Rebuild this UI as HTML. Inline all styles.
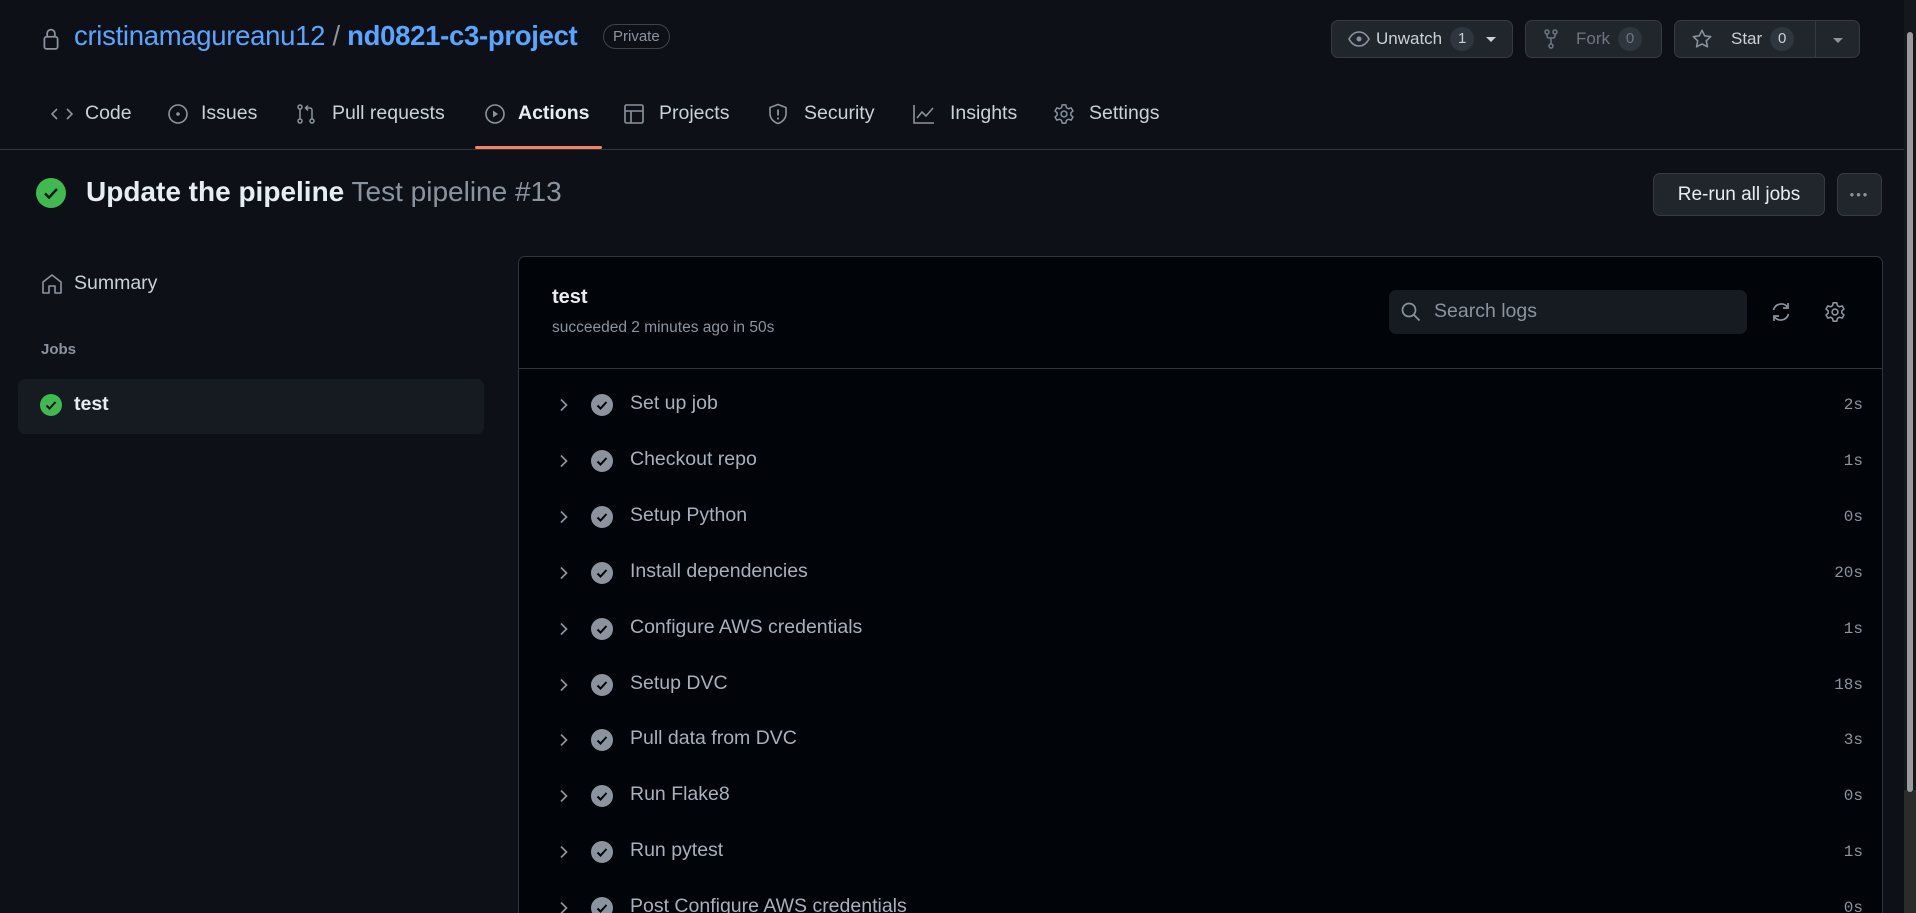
<!DOCTYPE html>
<html><head><meta charset="utf-8"><style>
*{box-sizing:border-box;margin:0;padding:0}
html,body{width:1916px;height:913px;overflow:hidden}
body{background:#0d1117;font-family:"Liberation Sans",sans-serif;color:#c9d1d9;position:relative}
.a{position:absolute}
svg{display:block}
.btn{position:absolute;border:1px solid #363b42;background:#21262d;border-radius:7px;color:#c9d1d9;font-size:17px;display:flex;align-items:center}
.cnt{display:inline-block;background:#30363d;border-radius:14px;min-width:24px;height:24px;line-height:24px;text-align:center;font-size:15px;margin-left:8px}
.tab{position:absolute;top:102px;font-size:19.5px;color:#c9d1d9;display:flex;align-items:center;gap:12px}
</style></head><body>
<!-- header -->
<svg class="a" style="left:42px;top:28px" width="18" height="22" viewBox="0 0 16 20"><rect x="2" y="8" width="12" height="11" rx="2" fill="none" stroke="#8b949e" stroke-width="1.6"/><path d="M4.5 8V5a3.5 3.5 0 017 0v3" fill="none" stroke="#8b949e" stroke-width="1.6"/></svg>
<div class="a" style="left:74px;top:20px;font-size:27.5px;color:#58a6ff;white-space:nowrap;letter-spacing:-0.3px">cristinamagureanu12<span style="color:#8b949e"> / </span><b>nd0821-c3-project</b></div>
<div class="a" style="left:603px;top:24px;border:1px solid #3d444d;border-radius:14px;padding:3px 9px;font-size:15px;color:#8b949e">Private</div>

<div class="btn" style="left:1331px;top:20px;width:182px;height:38px;padding-left:16px">
<svg width="22" height="16" viewBox="0 0 22 16"><path d="M1 8C4 2.5 7.5 1 11 1s7 1.5 10 7c-3 5.5-6.5 7-10 7S4 13.5 1 8z" fill="none" stroke="#8b949e" stroke-width="1.6"/><circle cx="11" cy="8" r="2.5" fill="#8b949e"/></svg>
<span style="margin-left:6px">Unwatch</span><span class="cnt">1</span><span style="margin-left:12px;border-left:5px solid transparent;border-right:5px solid transparent;border-top:5px solid #c9d1d9"></span></div>
<div class="btn" style="left:1525px;top:20px;width:137px;height:38px;padding-left:18px;color:#6e7681">
<svg width="14" height="20" viewBox="0 0 14 20"><circle cx="3" cy="3" r="2" fill="none" stroke="#6e7681" stroke-width="1.5"/><circle cx="11" cy="3" r="2" fill="none" stroke="#6e7681" stroke-width="1.5"/><circle cx="7" cy="17" r="2" fill="none" stroke="#6e7681" stroke-width="1.5"/><path d="M3 5v2a2 2 0 002 2h4a2 2 0 002-2V5M7 9v6" fill="none" stroke="#6e7681" stroke-width="1.5"/></svg>
<span style="margin-left:18px">Fork</span><span class="cnt" style="color:#6e7681">0</span></div>
<div class="btn" style="left:1674px;top:20px;width:186px;height:38px;padding-left:16px">
<svg width="22" height="22" viewBox="0 0 24 24"><path d="M12 2.5l2.9 6 6.6.9-4.8 4.6 1.2 6.5L12 17.4l-5.9 3.1 1.2-6.5L2.5 9.4l6.6-.9z" fill="none" stroke="#8b949e" stroke-width="1.7" stroke-linejoin="round"/></svg>
<span style="margin-left:18px">Star</span><span class="cnt">0</span>
<span style="position:absolute;left:140px;top:0;height:36px;border-left:1px solid #363b42"></span>
<span style="position:absolute;left:158px;top:17px;border-left:5px solid transparent;border-right:5px solid transparent;border-top:5px solid #8b949e"></span></div>

<!-- tabs -->
<div class="tab" style="left:51px"><svg width="22" height="16" viewBox="0 0 22 16"><path d="M6 3L1 8l5 5M16 3l5 5-5 5" fill="none" stroke="#8b949e" stroke-width="1.6"/></svg>Code</div>
<div class="tab" style="left:167px"><svg width="22" height="22" viewBox="0 0 22 22"><circle cx="11" cy="11" r="9" fill="none" stroke="#8b949e" stroke-width="1.6"/><circle cx="11" cy="11" r="1.8" fill="#8b949e"/></svg>Issues</div>
<div class="tab" style="left:296px;gap:16px"><svg width="20" height="22" viewBox="0 0 20 22"><circle cx="4" cy="4" r="2" fill="none" stroke="#8b949e" stroke-width="1.5"/><circle cx="4" cy="18" r="2" fill="none" stroke="#8b949e" stroke-width="1.5"/><circle cx="16" cy="18" r="2" fill="none" stroke="#8b949e" stroke-width="1.5"/><path d="M4 6v10M16 16V7a2 2 0 00-2-2h-4M12 2.5L9.5 5l2.5 2.5" fill="none" stroke="#8b949e" stroke-width="1.5"/></svg>Pull requests</div>
<div class="tab" style="left:484px;font-weight:bold;color:#e6edf3"><svg width="22" height="22" viewBox="0 0 22 22"><circle cx="11" cy="11" r="9" fill="none" stroke="#8b949e" stroke-width="1.6"/><path d="M9 7.5v7l5-3.5z" fill="#8b949e"/></svg>Actions</div>
<div class="a" style="left:475px;top:146px;width:127px;height:3px;background:#f78166;border-radius:2px"></div>
<div class="tab" style="left:623px;gap:14px"><svg width="22" height="22" viewBox="0 0 22 22"><rect x="2" y="2" width="18" height="18" rx="1.5" fill="none" stroke="#8b949e" stroke-width="1.6"/><path d="M2 8h18M8 8v12" stroke="#8b949e" stroke-width="1.6"/></svg>Projects</div>
<div class="tab" style="left:768px;gap:16px"><svg width="20" height="22" viewBox="0 0 20 22"><path d="M10 1.5l8 3v6c0 5-3.5 8.5-8 10-4.5-1.5-8-5-8-10v-6z" fill="none" stroke="#8b949e" stroke-width="1.6"/><path d="M10 6.5v6" stroke="#8b949e" stroke-width="1.8"/><circle cx="10" cy="15.5" r="1.1" fill="#8b949e"/></svg>Security</div>
<div class="tab" style="left:912px;gap:14px"><svg width="24" height="22" viewBox="0 0 24 22"><path d="M2 2v18h20M5 15l5-6 4 4 7-8" fill="none" stroke="#8b949e" stroke-width="1.6"/></svg>Insights</div>
<div class="tab" style="left:1053px;gap:14px"><svg width="22" height="22" viewBox="0 0 24 24"><path d="M10 2h4l.6 3 2.3 1.3 2.9-1 2 3.4-2.3 2v2.6l2.3 2-2 3.4-2.9-1-2.3 1.3-.6 3h-4l-.6-3-2.3-1.3-2.9 1-2-3.4 2.3-2v-2.6l-2.3-2 2-3.4 2.9 1L9.4 5z" fill="none" stroke="#8b949e" stroke-width="1.6" stroke-linejoin="round"/><circle cx="12" cy="12" r="3.2" fill="none" stroke="#8b949e" stroke-width="1.6"/></svg>Settings</div>
<div class="a" style="left:0;top:149px;width:1904px;height:1px;background:#30363d"></div>

<!-- title -->
<svg class="a" style="left:36px;top:178px" width="30" height="30" viewBox="0 0 30 30"><circle cx="15" cy="15" r="15" fill="#3fb950"/><path d="M9 15.5l4 4 8-8.5" fill="none" stroke="#0d1117" stroke-width="2.4"/></svg>
<div class="a" style="left:86px;top:176px;font-size:28px;white-space:nowrap"><b style="color:#e6edf3">Update the pipeline</b> <span style="color:#8b949e">Test pipeline #13</span></div>
<div class="btn" style="left:1653px;top:173px;width:172px;height:43px;justify-content:center;font-size:19px;color:#e6edf3">Re-run all jobs</div>
<div class="btn" style="left:1837px;top:173px;width:45px;height:43px;justify-content:center;font-size:13px;letter-spacing:2px;color:#8b949e">•••</div>

<!-- sidebar -->
<svg class="a" style="left:41px;top:273px" width="22" height="22" viewBox="0 0 22 22"><path d="M2 9l9-7 9 7v11h-6v-7H8v7H2z" fill="none" stroke="#8b949e" stroke-width="1.6" stroke-linejoin="round"/></svg>
<div class="a" style="left:74px;top:272px;font-size:19.5px;color:#c9d1d9">Summary</div>
<div class="a" style="left:41px;top:341px;font-size:15px;font-weight:bold;color:#8b949e">Jobs</div>
<div class="a" style="left:18px;top:379px;width:466px;height:55px;background:#161b22;border-radius:7px"></div>
<svg class="a" style="left:40px;top:394px" width="22" height="22" viewBox="0 0 22 22"><circle cx="11" cy="11" r="11" fill="#3fb950"/><path d="M6.5 11.5l3 3 6-6.5" fill="none" stroke="#0d1117" stroke-width="2"/></svg>
<div class="a" style="left:74px;top:393px;font-size:19.5px;font-weight:bold;color:#e6edf3">test</div>

<!-- main panel -->
<div class="a" style="left:518px;top:256px;width:1365px;height:680px;background:#010409;border:1px solid #30363d;border-radius:7px"></div>
<div class="a" style="left:519px;top:368px;width:1363px;height:1px;background:#30363d"></div>
<div class="a" style="left:552px;top:286px;font-size:20px;font-weight:bold;color:#e6edf3">test</div>
<div class="a" style="left:552px;top:319px;font-size:15.5px;color:#8b949e">succeeded 2 minutes ago in 50s</div>
<div class="a" style="left:1389px;top:290px;width:358px;height:44px;background:#161b22;border-radius:7px"></div>
<svg class="a" style="left:1401px;top:302px" width="20" height="20" viewBox="0 0 20 20"><circle cx="8" cy="8" r="6.5" fill="none" stroke="#8b949e" stroke-width="1.7"/><path d="M13 13l5.5 5.5" stroke="#8b949e" stroke-width="1.8"/></svg>
<div class="a" style="left:1434px;top:300px;font-size:19.5px;color:#8b949e">Search logs</div>
<svg class="a" style="left:1770px;top:301px" width="22" height="22" viewBox="0 0 22 22"><path d="M3.5 9A8 8 0 0117.5 6M18.5 13A8 8 0 014.5 16" fill="none" stroke="#8b949e" stroke-width="1.7"/><path d="M18 2v5h-5M4 20v-5h5" fill="none" stroke="#8b949e" stroke-width="1.7"/></svg>
<svg class="a" style="left:1824px;top:301px" width="22" height="22" viewBox="0 0 24 24"><path d="M10 2h4l.6 3 2.3 1.3 2.9-1 2 3.4-2.3 2v2.6l2.3 2-2 3.4-2.9-1-2.3 1.3-.6 3h-4l-.6-3-2.3-1.3-2.9 1-2-3.4 2.3-2v-2.6l-2.3-2 2-3.4 2.9 1L9.4 5z" fill="none" stroke="#8b949e" stroke-width="1.7" stroke-linejoin="round"/><circle cx="12" cy="12" r="3.2" fill="none" stroke="#8b949e" stroke-width="1.7"/></svg>

<!-- steps -->
<div id="steps"></div>
<script>
var s=[["Set up job","2s"],["Checkout repo","1s"],["Setup Python","0s"],["Install dependencies","20s"],["Configure AWS credentials","1s"],["Setup DVC","18s"],["Pull data from DVC","3s"],["Run Flake8","0s"],["Run pytest","1s"],["Post Configure AWS credentials","0s"]];
var h="";
for(var i=0;i<s.length;i++){var y=Math.round(405+i*55.9);
h+='<svg class="a" style="left:559px;top:'+(y-7)+'px" width="10" height="14" viewBox="0 0 10 14"><path d="M2 1.5L7.5 7 2 12.5" fill="none" stroke="#8b949e" stroke-width="1.7"/></svg>';
h+='<svg class="a" style="left:591px;top:'+(y-11)+'px" width="22" height="22" viewBox="0 0 22 22"><circle cx="11" cy="11" r="11" fill="#8b949e"/><path d="M6.5 11.5l3 3 6-6.5" fill="none" stroke="#010409" stroke-width="2"/></svg>';
h+='<div class="a" style="left:630px;top:'+(y-13)+'px;font-size:19.5px;color:#a8b1bb;white-space:nowrap">'+s[i][0]+'</div>';
h+='<div class="a" style="right:53px;top:'+(y-9)+'px;font-family:Liberation Mono,monospace;font-size:16px;color:#8b949e">'+s[i][1]+'</div>';}
document.getElementById("steps").innerHTML=h;
</script>

<!-- scrollbar -->
<div class="a" style="left:1904px;top:0;width:12px;height:913px;background:#2b2b2b"></div>
<div class="a" style="left:1904px;top:0;width:12px;height:790px;background:#14171c"></div>
<div class="a" style="left:1907px;top:32px;width:6px;height:760px;background:#9a9a9a;border-radius:3px"></div>
</body></html>
